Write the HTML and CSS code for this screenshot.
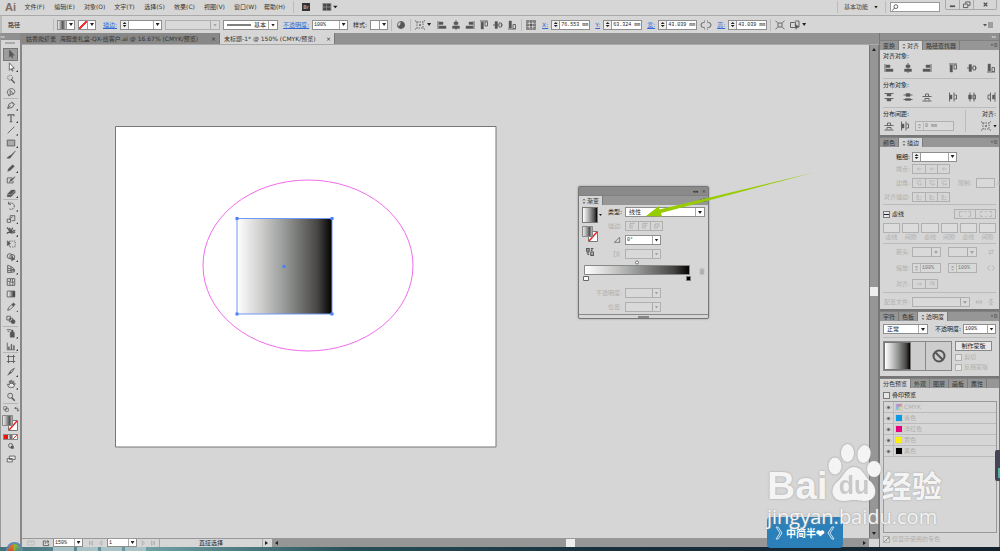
FILE: index.html
```html
<!DOCTYPE html>
<html lang="zh-CN">
<head>
<meta charset="utf-8">
<title>未标题-1* @ 150% (CMYK/预览)</title>
<link rel="stylesheet" href="styles.css">
</head>
<body>
<svg class="defs" aria-hidden="true">
  <defs>
    <linearGradient id="bw"><stop offset="0" stop-color="#fff"/><stop offset=".25" stop-color="#cfcfce"/><stop offset=".5" stop-color="#979a98"/><stop offset=".85" stop-color="#474543"/><stop offset="1" stop-color="#000"/></linearGradient>
    <linearGradient id="bwb"><stop offset="0" stop-color="#eee"/><stop offset=".3" stop-color="#bbb"/><stop offset=".7" stop-color="#555"/><stop offset="1" stop-color="#ccc"/></linearGradient>
    <symbol id="al" viewBox="0 0 12 12"><path d="M2 2v8"/><path class="f" d="M3 3h4v2.500H3zM3 7h7v2.500H3z"/></symbol>
    <symbol id="ac" viewBox="0 0 12 12"><path d="M6 1v10"/><path class="f" d="M4 3h4v2.500H4zM2.500 7h7v2.500h-7z"/></symbol>
    <symbol id="ar" viewBox="0 0 12 12"><path d="M10 2v8"/><path class="f" d="M5 3h4v2.500H5zM2 7h7v2.500H2z"/></symbol>
    <symbol id="at" viewBox="0 0 12 12"><path d="M2 2h8"/><path class="f" d="M3 3h2.500v7H3z"/><path d="M7 3h2.500v4H7z"/></symbol>
    <symbol id="am" viewBox="0 0 12 12"><path d="M1 6h10"/><path class="f" d="M3 2.500h2.500v7H3z"/><path d="M7 4h2.500v4H7z" fill="#d6d6d6"/></symbol>
    <symbol id="ab" viewBox="0 0 12 12"><path d="M2 10h8"/><path class="f" d="M3 2h2.500v7H3z"/><path d="M7 5.500h2.500v4H7z"/></symbol>
    <symbol id="dt" viewBox="0 0 12 12"><path d="M1.500 2.500h9M1.500 7.500h9"/><path class="f" d="M4 3h4v2H4zM4 8h4v2H4z"/></symbol>
    <symbol id="dm" viewBox="0 0 12 12"><path d="M1.500 4h9M1.500 8.500h9"/><path class="f" d="M4 2.500h4v3H4zM3.500 7.500h5v2h-5z"/></symbol>
    <symbol id="db" viewBox="0 0 12 12"><path d="M1.500 5.500h9M1.500 10h9"/><path d="M4.500 5V3h3v2M4 9.500v-2h4v2"/></symbol>
    <symbol id="dl" viewBox="0 0 12 12"><path d="M2.500 1.500v9M7 1.500v9"/><path class="f" d="M3 4h2v4H3z"/><path d="M7.500 4h2v4h-2"/></symbol>
    <symbol id="dc" viewBox="0 0 12 12"><path d="M4 1.500v9M8 1.500v9"/><path class="f" d="M2.500 4h3v4h-3z"/><path d="M7 4h2.500v4H7z"/></symbol>
    <symbol id="dr" viewBox="0 0 12 12"><path d="M5.500 1.500v9M10 1.500v9"/><path d="M5 4H3v4h2"/><path class="f" d="M7.500 4h2v4h-2z"/></symbol>
    <symbol id="target" viewBox="0 0 12 12"><path d="M3 3h6v6H3z" stroke-dasharray="1.500 1"/><path d="M1 1.500l1.500 1M11 1.500l-1.500 1M1 10.500l1.500-1M11 10.500l-1.500-1M6 5v2M5 6h2"/></symbol>
    <symbol id="chain" viewBox="0 0 12 12"><path d="M4.500 3.500H3.500a2.500 2.500 0 000 5h1M7.500 3.500h1a2.500 2.500 0 010 5h-1M4.500 1.500v1M7.500 1.500v1M4.500 9.500v1M7.500 9.500v1"/></symbol>
    <symbol id="iso" viewBox="0 0 12 12"><path d="M4 4h4v4H4zM1.500 2l2 1.500M10.500 2l-2 1.500M1.500 10l2-1.500M10.500 10l-2-1.500"/></symbol>
    <symbol id="globe" viewBox="0 0 12 12"><circle cx="6" cy="6" r="3.500"/><path class="f" d="M6 2.500a4 4 0 013.500 4C9 10 4 10 2.500 7.500c3 0 3-3 3.500-5z"/></symbol>
    <symbol id="ref" viewBox="0 0 12 12"><path d="M2 2h8v8H2zM6 2v8M2 6h8" stroke-dasharray="1 .6"/><path d="M1.500 1.500h2v2h-2zM5 1.500h2v2H5zM8.500 1.500h2v2h-2zM1.500 5h2v2h-2zM8.500 5h2v2h-2zM1.500 8.500h2v2h-2zM5 8.500h2v2H5zM8.500 8.500h2v2h-2z" stroke-width=".7"/><path class="f" d="M5 5h2v2H5z"/></symbol>
    <symbol id="sel" viewBox="0 0 12 12"><path d="M1.500 3.500h5v5h-5zM6 2h4v6H7"/><path class="f" d="M6 5l4 3-2 .5-1 2z"/></symbol>
    <symbol id="flyout" viewBox="0 0 12 12"><path class="f n" d="M1 5h4L3 7.500z"/><path d="M6 4h5M6 6h5M6 8h5"/></symbol>
    <symbol id="swap" viewBox="0 0 12 12"><path d="M2 4h7M7 2l2.500 2L7 6M10 8H3M5 6L2.500 8 5 10"/></symbol>
    <symbol id="mir" viewBox="0 0 12 12"><path d="M6 2v8M4.500 6L2 4v4zM7.500 6L10 4v4z"/></symbol>
    <symbol id="mirv" viewBox="0 0 12 12"><path d="M2 6h8M6 4.500L4 2h4zM6 7.500L4 10h4z"/></symbol>
    <symbol id="eye" viewBox="0 0 12 12"><path d="M.5 6Q6 .5 11.500 6 6 11.500.5 6z"/><circle class="f n" cx="6" cy="6" r="2.200"/></symbol>
    <symbol id="cap" viewBox="0 0 12 12"><path d="M10 6H4M6 3.500L3.500 6 6 8.500"/></symbol>
    <symbol id="join" viewBox="0 0 12 12"><path d="M2 3h8M2 6h3v4M6 8h4M8 6l2 2-2 2"/></symbol>
    <symbol id="base" viewBox="0 0 12 12"><path d="M3 2v8h7M5 3v5M7 6h3"/></symbol>
  </defs>
</svg>

<div class="app">
  <header class="menubar">
    <span class="logo">Ai</span>
    <nav class="menus">
      <button>文件(F)</button><button>编辑(E)</button><button>对象(O)</button><button>文字(T)</button><button>选择(S)</button><button>效果(C)</button><button>视图(V)</button><button>窗口(W)</button><button>帮助(H)</button>
    </nav>
    <i class="sep"></i>
    <button class="bridge" aria-label="Bridge">Br</button>
    <button class="arrange" aria-label="排列文档"><svg viewBox="0 0 17 9"><path d="M0 0h10v9H0z" fill="#888"/><path d="M1 1h3v3H1zM5 1h4v3H5zM1 5h3v3H1zM5 5h4v3H5z" fill="#444"/><path d="M12 3h5l-2.500 3z"/></svg></button>
    <span class="grow"></span>
    <i class="sep"></i>
    <button class="workspace-name">基本功能 <b class="tri"></b></button>
    <i class="sep"></i>
    <label class="search"><svg viewBox="0 0 8 8"><circle cx="5" cy="3" r="2.200"/><path d="M3.500 4.500L1 7.500"/></svg><input type="search" aria-label="搜索"></label>
    <div class="winbtns">
      <button aria-label="最小化"><svg viewBox="0 0 10 8"><path d="M2 6h6" stroke-width="2"/></svg></button>
      <button aria-label="还原"><svg viewBox="0 0 10 8"><path d="M4 3V1h5v4H7M1.500 3.500h5v4h-5z"/></svg></button>
      <button class="close" aria-label="关闭"><svg viewBox="0 0 10 8"><path d="M3 2l4 4M7 2L3 6" stroke-width="1.500"/></svg></button>
    </div>
  </header>

  <div class="control">
    <span class="object-type">路径</span><i class="sep"></i>
    <button class="swatch" aria-label="填色"><span class="chip grad"></span><b class="tri"></b></button>
    <button class="swatch" aria-label="描边颜色"><span class="chip none"></span><b class="tri"></b></button>
    <a class="lbl first" href="#stroke">描边:</a>
    <span class="num w42"><span class="spin"></span><input aria-label="描边粗细"><b class="drop"></b></span>
    <span class="dd w55 off"><select disabled aria-label="变量宽度"><option></option></select></span>
    <span class="dd w55 brush"><svg viewBox="0 0 24 4"><path d="M0 2h24"/></svg><select aria-label="画笔定义"><option>基本</option></select></span>
    <a class="lbl" href="#opacity">不透明度:</a>
    <span class="num w36"><input aria-label="不透明度" value="100%"><b class="drop"></b></span>
    <span class="lbl">样式:</span>
    <button class="swatch" aria-label="图形样式"><span class="chip"></span><b class="tri"></b></button>
    <i class="sep"></i>
    <button class="ib" aria-label="重新着色"><svg><use href="#globe"/></svg></button><i class="sep"></i>
    <button class="ib wide" aria-label="对齐到"><svg><use href="#target"/></svg><b class="tri"></b></button>
    <div class="aligns">
      <button class="ib" aria-label="左对齐"><svg><use href="#al"/></svg></button><button class="ib" aria-label="水平居中"><svg><use href="#ac"/></svg></button><button class="ib" aria-label="右对齐"><svg><use href="#ar"/></svg></button><button class="ib" aria-label="顶对齐"><svg><use href="#at"/></svg></button><button class="ib" aria-label="垂直居中"><svg><use href="#am"/></svg></button><button class="ib" aria-label="底对齐"><svg><use href="#ab"/></svg></button>
    </div>
    <i class="sep"></i>
    <button class="ib" aria-label="参考点"><svg><use href="#ref"/></svg></button>
    <label class="lbl link" for="px">X:</label><span class="num w39"><span class="spin"></span><input id="px" value="76.553 mm"></span>
    <label class="lbl link" for="py">Y:</label><span class="num w39"><span class="spin"></span><input id="py" value="63.324 mm"></span>
    <label class="lbl link" for="pw">宽:</label><span class="num w39"><span class="spin"></span><input id="pw" value="43.039 mm"></span>
    <button class="ib" aria-label="约束比例"><svg><use href="#chain"/></svg></button>
    <label class="lbl link" for="ph">高:</label><span class="num w39"><span class="spin"></span><input id="ph" value="43.039 mm"></span>
    <i class="sep"></i>
    <button class="ib" aria-label="隔离"><svg><use href="#iso"/></svg></button>
    <button class="ib wide" aria-label="选择类似对象"><svg><use href="#sel"/></svg><b class="tri"></b></button>
    <span class="grow"></span>
    <button class="ib end" aria-label="面板菜单"><svg><use href="#flyout"/></svg></button>
  </div>

  <div class="work">
    <aside class="toolbox">
      <div class="dark-head">▸▸</div>
      <i class="grip"></i>
      <div class="tools g4">
        <button class="on" aria-label="选择"><svg viewBox="0 0 12 12"><path class="f" d="M4 1v9l2-2 1.500 3 1-.5L7 7.500h3z"/></svg></button>
        <button class="more" aria-label="直接选择"><svg viewBox="0 0 12 12"><path d="M4 1v9l2-2 1.500 3 1-.5L7 7.500h3z" fill="#fff"/></svg></button>
        <button aria-label="魔棒"><svg viewBox="0 0 12 12"><circle cx="5" cy="4.500" r="3" stroke-dasharray="1.500 1"/><path d="M6 6l4.500 5" stroke-width="1.500"/></svg></button>
        <button aria-label="套索"><svg viewBox="0 0 12 12"><path d="M3 9C0 7 2 2 6.500 2S12 7 8.500 8.500M5 4v6l1.500-1.500H9zM3 8.500c-1 2 1 3 2 1"/></svg></button>
      </div>
      <div class="tools g8">
        <button class="more" aria-label="钢笔"><svg viewBox="0 0 12 12"><path d="M2 10l1.500-5L7 3l2.500 2.500-2 3.500zM2 10l3.500-3.500M7 2l3.500 3.500"/></svg></button>
        <button class="more" aria-label="文字"><svg viewBox="0 0 12 12"><path d="M2.500 4V2h7v2M6 2v8M4.500 10.500h3" stroke-width="1.300"/></svg></button>
        <button class="more" aria-label="直线"><svg viewBox="0 0 12 12"><path d="M2 10l8-8"/></svg></button>
        <button class="more" aria-label="矩形"><svg viewBox="0 0 12 12"><path d="M1.500 2.500h9v7h-9z" fill="#aaa"/></svg></button>
        <button aria-label="画笔"><svg viewBox="0 0 12 12"><path class="f" d="M11.500 1L6 6 5 7l1 1 1-1zM5 7C3 7 3 9 1 9.500c2 1 5 .5 5-1.500z"/></svg></button>
        <button class="more" aria-label="铅笔"><svg viewBox="0 0 12 12"><path class="f" d="M2 10l1-3 5-5 2 2-5 5z"/></svg></button>
        <button aria-label="斑点画笔"><svg viewBox="0 0 12 12"><path d="M1.500 3.500h6M1.500 3.500v6h7V7"/><path class="f" d="M11 2L6 5 4 8l3-1z"/></svg></button>
        <button class="more" aria-label="橡皮擦"><svg viewBox="0 0 12 12"><path class="f" d="M1.500 7.500l5-5h4.500L6.500 7.500zM1.500 8.500v2h4.500l5-5v-2L6.500 8.500z"/></svg></button>
      </div>
      <div class="tools g10">
        <button class="more" aria-label="旋转"><svg viewBox="0 0 12 12"><path d="M3 3.500C6 1 10 3 10 6s-3 5-6 3.500M3 1v3h3" stroke-dasharray="3 .7"/></svg></button>
        <button class="more" aria-label="缩放"><svg viewBox="0 0 12 12"><path d="M1.500 6h4v4h-4zM5 5V2h5.500v6H7M4 7l4-4"/></svg></button>
        <button class="more" aria-label="宽度"><svg viewBox="0 0 12 12"><path d="M1 2c3 1 2 5 5 5s3-3 5-1M1 9c3-4 6 2 10-2M4 2l2 4 2-4" stroke-width="1.500"/></svg></button>
        <button aria-label="自由变换"><svg viewBox="0 0 12 12"><path class="f" d="M1.500 2v6l4-2.500z"/><path d="M4 2.500h7v7H4z" stroke-dasharray="1.500 1.200"/></svg></button>
        <button class="more" aria-label="形状生成器"><svg viewBox="0 0 12 12"><circle cx="4.500" cy="5" r="3"/><circle cx="7.500" cy="6" r="3"/><path class="f" d="M7 5v6l1.500-2h2z"/></svg></button>
        <button class="more" aria-label="透视网格"><svg viewBox="0 0 12 12"><path d="M2 1.500v9l8-1V6L6 3v7M2 1.500L6 3M2 5l8 2M2 8h8"/></svg></button>
        <button aria-label="网格"><svg viewBox="0 0 12 12"><path d="M1.500 2h9v8h-9zM2 6c2-3 5 3 8-1M5 2c2 2-2 5 0 8M8 2c-1 2 1 5 0 8"/></svg></button>
        <button aria-label="渐变"><svg viewBox="0 0 12 12"><path d="M1.500 2.500h9v7h-9z" fill="url(#bw)"/></svg></button>
        <button class="more" aria-label="吸管"><svg viewBox="0 0 12 12"><path d="M2 10l1-3 4-4 2 2-4 4z" /><path class="f" d="M7 3l2-2 2 2-2 2z"/></svg></button>
        <button aria-label="混合"><svg viewBox="0 0 12 12"><path d="M1 1.500h4.500v4.500H1zM4 4h4v4H4z"/><circle class="f" cx="8.500" cy="8" r="2.500"/></svg></button>
      </div>
      <div class="tools g2">
        <button class="more" aria-label="符号喷枪"><svg viewBox="0 0 12 12"><path class="f" d="M5 5h5v6H5zM6.500 2.500h2V5h-2z"/><path d="M1 2h5M2 4h2"/></svg></button>
        <button class="more" aria-label="柱形图"><svg viewBox="0 0 12 12"><path d="M1.500 2v8.500h9"/><path class="f" d="M3 7h1v3H3zM6 4h1v6H6zM9 5.500h1V10H9z"/></svg></button>
      </div>
      <div class="tools g4">
        <button aria-label="画板"><svg viewBox="0 0 12 12"><path d="M3 1v10M9 1v10M1 3h10M1 9h10"/></svg></button>
        <button class="more" aria-label="切片"><svg viewBox="0 0 12 12"><path class="f" d="M2 10l3-5 2 1.500z"/><path d="M5 5l5-3.500-3 5"/></svg></button>
        <button class="more" aria-label="抓手"><svg viewBox="0 0 12 12"><path d="M3.500 10L1.500 6.500l1-.5L4 7.500V2.500l1-.5 1 4V1.500h1L7.500 6l1-3.500 1 .5L9 7l1-1.500h1L9 10z" fill="#eee"/></svg></button>
        <button aria-label="缩放视图"><svg viewBox="0 0 12 12"><circle cx="5" cy="4.500" r="3"/><path d="M7 7l3.500 3.500" stroke-width="1.800"/></svg></button>
      </div>
      <div class="swaps"><svg viewBox="0 0 8 8"><path d="M1 1h4v4H1zM3 3h4v4H3z" fill="#fff"/></svg><svg viewBox="0 0 8 8"><path d="M3 1L1 3l2 1M1 3h4v3M4 5l1 2 2-2"/></svg></div>
      <div class="fillstroke"><svg viewBox="0 0 17 17"><path d="M6.500 5.500h9v10h-9z" fill="#fff" stroke="#777"/><path d="M7 15l8-9" stroke="#e22" stroke-width="1.500"/><path d="M.5.5h10v10H.5z" fill="url(#bwb)" stroke="#888"/></svg></div>
      <div class="modes"><span class="red"></span><span class="grad"></span><span class="none"></span></div>
      <div class="tools g1"><button aria-label="绘图模式"><svg viewBox="0 0 12 12"><circle cx="5.500" cy="5.500" r="2.500"/><path class="f" d="M6 6h3v3H6z"/></svg></button><button aria-label="屏幕模式"><svg viewBox="0 0 12 12"><path d="M4 2.500h7v4H4zM1.500 5.500h6v4h-6z" fill="#eee"/></svg></button></div>
    </aside>

    <main class="doc">
      <div class="tabs">
        <button class="tab t1">姑香爬虾羹&nbsp; 海胆羹礼盒-QX-给客户.ai @ 16.67% (CMYK/预览)<span>×</span></button>
        <button class="tab t2 on">未标题-1* @ 150% (CMYK/预览)<span>×</span></button>
      </div>
      <div class="view">
        <div class="canvas">
          <svg class="artboard" viewBox="115 126 382 322">
            <path d="M115.500 126.500h380.500v320.500h-380.500z" fill="#fff" stroke="#777"/>
            <ellipse cx="308" cy="265.500" rx="105" ry="85.500" fill="none" stroke="#f06bea"/>
            <path d="M237 218.500h95v95.500h-95z" fill="url(#bw)" stroke="#6f97f5"/>
            <path d="M235.500 217h3v3h-3zM330.500 217h3v3h-3zM235.500 312.500h3v3h-3zM330.500 312.500h3v3h-3zM282.500 265h3v3h-3z" fill="#4d80f5" stroke="none"/>
          </svg>

          <section class="float">
            <div class="float-head"><span>◂◂</span><span>×</span></div>
            <div class="ptabs"><button class="on"><svg class="updown" viewBox="0 0 4 8"><path d="M1 3.500L2 2l1 1.500M1 5l1 1.500L3 5"/></svg>渐变</button><span class="grow"></span><svg class="fly"><use href="#flyout"/></svg></div>
            <div class="gbody">
              <div class="gtop">
                <div class="gleft">
                  <div class="gpick"><span class="gthumb"></span><b class="tri"></b></div>
                  <svg viewBox="0 0 17 17"><path d="M6.500 5.500h9v10h-9z" fill="#fff" stroke="#777"/><path d="M7 15l8-9" stroke="#e22" stroke-width="1.500"/><path d="M.5.5h10v10H.5z" fill="url(#bwb)" stroke="#888"/></svg>
                  <svg class="rev" viewBox="0 0 12 12"><path d="M2 2h3v3H2zM7 6h3v4H7zM7 2h3M2 7h3M7 4h2M3 9h2" stroke-width="1.400"/></svg>
                </div>
                <div class="gform">
                  <label for="gt">类型:</label><span class="dd"><select id="gt"><option>线性</option></select></span>
                  <label class="dim">描边:</label><span class="seg off"><button disabled aria-label="描边中"><svg viewBox="0 0 12 12"><path d="M3 10V2h7M6 10V4" stroke-width="1.500"/></svg></button><button disabled aria-label="沿描边"><svg viewBox="0 0 12 12"><path d="M3 10V2h7M6 10V4l3 2" stroke-width="1.500"/></svg></button><button disabled aria-label="跨描边"><svg viewBox="0 0 12 12"><path d="M3 10V3h7M6 10V6h4" stroke-width="1.500"/></svg></button></span>
                  <label for="ga"><svg class="mini" viewBox="0 0 12 12"><path d="M2 9.500h8.500M2 9.500L10 2v7.500"/></svg></label><span class="num w36"><input id="ga" value="0°"><b class="drop"></b></span>
                  <label for="gr" class="dim"><svg class="mini" viewBox="0 0 12 12"><path d="M2 2v8M1 2h3M1 10h3M5 3h5M5 9h5"/><circle cx="7.500" cy="6" r="2"/></svg></label><span class="num w36 off"><input id="gr" disabled><b class="drop"></b></span>
                </div>
              </div>
              <div class="ramp">
                <svg viewBox="0 0 107 21"><path d="M.5 5.500h105v9H.5z" fill="url(#bw)" stroke="#888"/><circle cx="53" cy="2.500" r="1.500" fill="#fff" stroke="#555" stroke-width=".8"/><path d="M-.5 16.500h5v4h-5z" fill="#fff" stroke="#666"/><path d="M102.500 16.500h4v4h-4z" fill="#000" stroke="#777"/></svg>
                <svg class="mini dim" viewBox="0 0 12 12"><path class="f" d="M3 4h6v7H3z"/><path d="M2 3h8M5 2h2"/></svg>
              </div>
              <div class="gform low">
                <label class="dim" for="go">不透明度:</label><span class="num w36 off"><input id="go" disabled><b class="drop"></b></span>
                <label class="dim" for="gp">位置:</label><span class="num w36 off"><input id="gp" disabled><b class="drop"></b></span>
              </div>
            </div>
            <div class="float-foot"><i></i></div>
          </section>

          <svg class="arrow" viewBox="645 170 170 50"><path d="M646 216l13-10 .5 3.500L814 172.500 661 213l1 3.500z" fill="#97cc00"/></svg>
        </div>
        <div class="vscroll"><b class="up"></b><i></i><b class="down"></b></div>
      </div>
      <div class="status">
        <svg class="mini dim" viewBox="0 0 12 12"><path d="M1 3h10v6H1zM4 5h4"/></svg>
        <svg class="mini" viewBox="0 0 12 12"><path d="M6 3H2v7h8V7M5 7c0-3 2-3 5-3M8 2l2.500 2L8 6" stroke-width="1.300"/></svg>
        <span class="num zoomlvl"><input aria-label="缩放级别" value="150%"><b class="drop"></b></span>
        <button class="nav" aria-label="首页"><svg viewBox="0 0 8 8"><path d="M2 1v6M6 1L3 4l3 3z"/></svg></button><button class="nav" aria-label="上一个"><svg viewBox="0 0 8 8"><path d="M5 1L2 4l3 3z"/></svg></button>
        <span class="num page"><input aria-label="画板编号" value="1"><b class="drop"></b></span>
        <button class="nav" aria-label="下一个"><svg viewBox="0 0 8 8"><path d="M3 1l3 3-3 3z"/></svg></button><button class="nav" aria-label="末页"><svg viewBox="0 0 8 8"><path d="M6 1v6M2 1l3 3-3 3z"/></svg></button>
        <span class="toolname">直接选择</span>
        <b class="right"></b>
        <div class="hscroll"><b class="left"></b><i></i><b class="right"></b></div>
        <span class="corner"></span>
      </div>
    </main>

    <aside class="dock">
      <div class="dark-head">▸▸</div>
      <section class="panel">
        <div class="ptabs"><button>变换</button><button class="on"><svg class="updown" viewBox="0 0 4 8"><path d="M1 3.500L2 2l1 1.500M1 5l1 1.500L3 5"/></svg>对齐</button><button>路径查找器</button><span class="grow"></span><svg class="fly"><use href="#flyout"/></svg></div>
        <div class="pbody align">
          <h3>对齐对象:</h3>
          <div class="six"><button class="ib" aria-label="左对齐"><svg><use href="#al"/></svg></button><button class="ib" aria-label="水平居中"><svg><use href="#ac"/></svg></button><button class="ib" aria-label="右对齐"><svg><use href="#ar"/></svg></button><button class="ib g" aria-label="顶对齐"><svg><use href="#at"/></svg></button><button class="ib" aria-label="垂直居中"><svg><use href="#am"/></svg></button><button class="ib" aria-label="底对齐"><svg><use href="#ab"/></svg></button></div>
          <hr>
          <h3>分布对象:</h3>
          <div class="six"><button class="ib" aria-label="顶分布"><svg><use href="#dt"/></svg></button><button class="ib" aria-label="垂直分布"><svg><use href="#dm"/></svg></button><button class="ib" aria-label="底分布"><svg><use href="#db"/></svg></button><button class="ib g" aria-label="左分布"><svg><use href="#dl"/></svg></button><button class="ib" aria-label="水平分布"><svg><use href="#dc"/></svg></button><button class="ib" aria-label="右分布"><svg><use href="#dr"/></svg></button></div>
          <hr>
          <div class="spacing">
            <div><h3>分布间距:</h3><div class="line"><button class="ib" aria-label="垂直间距"><svg><use href="#db"/></svg></button><button class="ib" aria-label="水平间距"><svg><use href="#dl"/></svg></button><span class="num w39 off"><span class="spin"></span><input disabled aria-label="间距" value="0 mm"></span></div></div>
            <div class="to"><h3>对齐:</h3><button class="ib wide" aria-label="对齐到"><svg><use href="#target"/></svg><b class="tri"></b></button></div>
          </div>
        </div>
      </section>

      <section class="panel" id="stroke">
        <div class="ptabs"><button>颜色</button><button class="on"><svg class="updown" viewBox="0 0 4 8"><path d="M1 3.500L2 2l1 1.500M1 5l1 1.500L3 5"/></svg>描边</button><span class="grow"></span><svg class="fly"><use href="#flyout"/></svg></div>
        <div class="pbody stroke">
          <div class="row"><label for="sw">粗细:</label><span class="num w45"><span class="spin"></span><input id="sw"><b class="drop"></b></span></div>
          <div class="row dim"><label>端点:</label><span class="seg off"><button disabled aria-label="平头"><svg><use href="#cap"/></svg></button><button disabled aria-label="圆头"><svg><use href="#cap"/></svg></button><button disabled aria-label="方头"><svg><use href="#cap"/></svg></button></span></div>
          <div class="row dim"><label>边角:</label><span class="seg off"><button disabled aria-label="斜接"><svg><use href="#join"/></svg></button><button disabled aria-label="圆角"><svg><use href="#join"/></svg></button><button disabled aria-label="斜角"><svg><use href="#join"/></svg></button></span><label class="limit" for="lim">限制:</label><span class="num w18 off"><input id="lim" disabled></span>x</div>
          <div class="row dim"><label>对齐描边:</label><span class="seg off"><button disabled aria-label="居中"><svg><use href="#base"/></svg></button><button disabled aria-label="内侧"><svg><use href="#base"/></svg></button><button disabled aria-label="外侧"><svg><use href="#base"/></svg></button></span></div>
          <hr>
          <div class="dashhead"><label><input type="checkbox" class="minus">虚线</label><span class="seg off"><button disabled aria-label="保留精确"><svg viewBox="0 0 20 10"><path d="M3 8V2h4M9 2h3M14 2h3v6M3 8h3M14 8h3"/></svg></button><button disabled aria-label="对齐到角"><svg viewBox="0 0 20 10"><path d="M6 2H3v2M14 2h3v2M9 2h2M3 6v2h3M14 8h3V6M9 8h2"/></svg></button></span></div>
          <div class="dashes dim"><label><input disabled>虚线</label><label><input disabled>间隙</label><label><input disabled>虚线</label><label><input disabled>间隙</label><label><input disabled>虚线</label><label><input disabled>间隙</label></div>
          <hr>
          <div class="row tall dim"><label>箭头:</label><span class="dd w29 off"><select disabled aria-label="起点箭头"><option></option></select></span><span class="dd w29 off"><select disabled aria-label="终点箭头"><option></option></select></span><svg class="mini end" viewBox="0 0 12 12"><use href="#swap"/></svg></div>
          <div class="row tall dim"><label>缩放:</label><span class="num w29 off"><span class="spin"></span><input disabled aria-label="起点缩放" value="100%"></span><span class="num w29 off"><span class="spin"></span><input disabled aria-label="终点缩放" value="100%"></span><svg class="mini end" viewBox="0 0 12 12"><use href="#chain"/></svg></div>
          <div class="row tall dim"><label>对齐:</label><span class="seg off"><button disabled aria-label="超出端点"><svg viewBox="0 0 12 12"><path d="M2 6h7M7 4l3 2-3 2"/></svg></button><button disabled aria-label="端点处"><svg viewBox="0 0 12 12"><path d="M2 6h7M7 4l3 2-3 2M3 3h7"/></svg></button></span></div>
          <hr>
          <div class="row prof dim"><label for="prof">配置文件:</label><span class="dd w58 off"><select id="prof" disabled><option></option></select></span><svg class="mini end" viewBox="0 0 12 12"><use href="#mir"/></svg><svg class="mini" viewBox="0 0 12 12"><use href="#mirv"/></svg></div>
        </div>
      </section>

      <section class="panel" id="opacity">
        <div class="ptabs"><button>字符</button><button>色板</button><button class="on"><svg class="updown" viewBox="0 0 4 8"><path d="M1 3.500L2 2l1 1.500M1 5l1 1.500L3 5"/></svg>透明度</button><span class="grow"></span><svg class="fly"><use href="#flyout"/></svg></div>
        <div class="pbody trans">
          <div class="blend"><span class="dd w45"><select aria-label="混合模式"><option>正常</option></select></span><span class="oplabel"><label for="op">不透明度:</label><span class="num w33"><input id="op" value="100%"><b class="drop"></b></span></span></div>
          <hr>
          <div class="maskrow">
            <div class="thumbs"><span class="gthumb"></span><span class="mask"><svg viewBox="0 0 14 14"><circle cx="7" cy="7" r="5.500"/><path d="M3 3l8 8"/></svg></span></div>
            <div class="maskopts"><button>制作蒙版</button><label class="dim"><input type="checkbox" disabled>剪切</label><label class="dim"><input type="checkbox" disabled>反相蒙版</label></div>
          </div>
        </div>
      </section>

      <section class="panel last">
        <div class="ptabs"><button class="on">分色预览</button><button>外观</button><button>图层</button><button>画板</button><button>属性</button></div>
        <div class="pbody sepv">
          <label class="over"><input type="checkbox">叠印预览</label>
          <ul class="inks dim">
            <li><svg class="mini" viewBox="0 0 12 12"><use href="#eye"/></svg><i class="ink cmyk"></i>CMYK</li>
            <li><svg class="mini" viewBox="0 0 12 12"><use href="#eye"/></svg><i class="ink c"></i>青色</li>
            <li><svg class="mini" viewBox="0 0 12 12"><use href="#eye"/></svg><i class="ink m"></i>洋红色</li>
            <li><svg class="mini" viewBox="0 0 12 12"><use href="#eye"/></svg><i class="ink y"></i>黄色</li>
            <li><svg class="mini" viewBox="0 0 12 12"><use href="#eye"/></svg><i class="ink k"></i>黑色</li>
          </ul>
          <label class="spot dim"><input type="checkbox" checked disabled>仅显示使用的专色</label>
        </div>
      </section>
    </aside>
  </div>

  <footer class="taskbar"><span class="orb"></span><i></i><i></i><i></i><i></i></footer>
</div>

<span class="side-widget"></span>
<div class="badge"><svg viewBox="0 0 8 14"><path d="M1 1h2l4 6-4 6H1l4-6z"/></svg>中简半❤<svg viewBox="0 0 8 14"><path d="M7 1H5L1 7l4 6h2L3 7z"/></svg></div>
<div class="watermark">
  <div class="brand"><span>Bai</span>
    <svg viewBox="0 0 54 58"><g><ellipse cx="7" cy="22" rx="6.500" ry="8.500"/><ellipse cx="19.500" cy="9" rx="6.500" ry="9"/><ellipse cx="36" cy="10" rx="6.500" ry="9" transform="rotate(10 36 10)"/><ellipse cx="46" cy="25" rx="7" ry="8"/><path d="M26 23c8 0 10 9 16 14 9 8 6 20-5 20-5 0-7-1-11-1s-6 1-11 1C4 57 1 45 9 38c7-6 9-15 17-15z"/></g><text x="26" y="50" text-anchor="middle" class="du">du</text></svg>
    <span class="jy">经验</span></div>
  <div class="site">jingyan.baidu.com</div>
</div>
</body>
</html>
```

FILE: styles.css
```css
* { box-sizing: border-box; }
body {
  margin: 0;
  overflow: hidden;
  background: #d6d6d6;
  color: #222;
  font: 6px/8px "DejaVu Sans", "Noto Sans CJK SC", sans-serif;
}
button, input, select {
  font: inherit;
  color: inherit;
  margin: 0;
  padding: 0;
  border: 0;
  border-radius: 0;
  background: none;
  min-width: 0;
}
a { color: #3468d8; }
h3 { margin: 0; font: inherit; }
svg { display: block; fill: none; stroke: #555; overflow: visible; flex: none; }
svg .f { fill: #555; stroke-width: .5; }
svg .n { stroke: none; }
.defs { position: absolute; width: 0; height: 0; }
.grow { flex: 1; }
.app { display: flex; flex-direction: column; height: 100vh; }
.dim, .off { color: #b0b0b0; }
.dim svg, svg.dim, .off svg { stroke: #b0b0b0; }
.dim .f { fill: #b0b0b0; }
.sep { width: 1px; height: 12px; background: #bbb; flex: none; }
.tri, .up, .down, .left, .right { width: 4px; height: 3px; background: #222; clip-path: polygon(0 0, 100% 0, 50% 100%); flex: none; }
.up { clip-path: polygon(50% 0, 100% 100%, 0 100%); }
.left, .right { width: 3px; height: 4px; }
.left { clip-path: polygon(0 50%, 100% 0, 100% 100%); }
.right { clip-path: polygon(100% 50%, 0 0, 0 100%); }
.mini { width: 10px; height: 8px; }

/* fields */
.num, .dd {
  display: flex;
  position: relative;
  height: 10px;
  border: 1px solid #8e8e8e;
  background: #fff;
  flex: none;
}
.num input { flex: 1; width: 0; font: 5px/8px "Liberation Mono", monospace; padding-left: 1px; }
.drop { width: 8px; border-left: 1px solid #aaa; display: grid; place-items: center; }
.drop::after { content: ""; width: 4px; height: 3px; background: #222; clip-path: polygon(0 0, 100% 0, 50% 100%); }
.spin { width: 8px; border-right: 1px solid #999; background: #eee; display: flex; flex-direction: column; align-items: center; justify-content: center; gap: 1px; flex: none; }
.spin::before, .spin::after { content: ""; width: 4px; height: 2px; background: #222; clip-path: polygon(50% 0, 100% 100%, 0 100%); }
.spin::after { clip-path: polygon(0 0, 100% 0, 50% 100%); }
.dd select { appearance: none; flex: 1; padding: 0 10px 0 3px; opacity: 1; }
.dd::before { content: ""; position: absolute; right: 8px; top: 0; bottom: 0; width: 1px; background: #aaa; }
.dd::after { content: ""; position: absolute; right: 2px; top: 3px; width: 4px; height: 3px; background: #222; clip-path: polygon(0 0, 100% 0, 50% 100%); pointer-events: none; }
.off.num, .off.dd { background: #d9d9d9; border-color: #b0b0b0; }
.off .spin { background: #d9d9d9; border-color: #bbb; }
.off .drop::after, .off.dd::after, .off .spin::before, .off .spin::after { background: #a2a2a2; }
.off input { color: #777; }
.w18 { width: 19px; } .w29 { width: 29px; } .w33 { width: 33px; } .w36 { width: 36px; }
.w39 { width: 39px; } .w42 { width: 42px; } .w45 { width: 45px; } .w55 { width: 55px; } .w58 { width: 58px; }
.seg { display: flex; height: 10px; border: 1px solid #b0b0b0; flex: none; }
.seg button { width: 12px; display: grid; place-items: center; }
.seg button + button { border-left: 1px solid #b0b0b0; }
.seg svg { width: 8px; height: 8px; }
.ib { width: 12px; height: 12px; display: flex; align-items: center; gap: 1px; flex: none; }
.ib svg { width: 12px; height: 12px; stroke: #666; }
.ib.wide { width: 16px; }
input[type=checkbox] { appearance: none; width: 7px; height: 7px; border: 1px solid #777; background: #e6e6e6; margin-right: 2px; flex: none; }
.dim input[type=checkbox] { border-color: #b0b0b0; }
label { white-space: nowrap; }

/* menu bar */
.menubar { display: flex; align-items: center; height: 16px; border-bottom: 1px solid #aaa; padding: 0 3px 1px 5px; flex: none; }
.logo { width: 19px; font: bold 11px/14px "Liberation Sans", sans-serif; color: #806d60; }
.menus { display: flex; gap: 9px; margin-right: 8px; color: #333; }
.menus button { width: 21px; white-space: nowrap; }
.bridge { margin: 0 12px 0 8px; width: 8px; height: 8px; background: #333; color: #ccc; font-size: 5px; }
.arrange svg { width: 16px; height: 8px; stroke: none; fill: #222; }
.workspace-name { display: flex; align-items: center; gap: 6px; margin: 0 7px 0 6px; color: #444; }
.search { display: flex; align-items: center; width: 50px; height: 10px; border: 1px solid #999; background: #fff; margin: 0 5px 0 4px; }
.search svg { width: 8px; height: 7px; }
.search input { width: 0; flex: 1; }
.winbtns { display: flex; align-self: flex-start; height: 10px; border: 1px solid #aaa; border-top: 0; border-radius: 0 0 2px 2px; }
.winbtns button { width: 14px; display: grid; place-items: center; border-right: 1px solid #aaa; }
.winbtns .close { width: 22px; border: 0; }
.winbtns svg { width: 9px; height: 7px; }

/* control bar */
.control { display: flex; align-items: center; gap: 3px; height: 17px; border-left: 2px solid #bbb; padding-left: 6px; flex: none; }
.object-type { width: 42px; }
.swatch { display: flex; align-items: center; gap: 2px; width: 18px; height: 10px; border: 1px solid #8e8e8e; background: #fff; }
.chip { width: 9px; height: 8px; border-right: 1px solid #999; background: #fff; }
.grad { background: linear-gradient(90deg, #eee, #555 60%, #ccc); }
.none { background: linear-gradient(135deg, #fff 43%, #e33 43%, #e33 57%, #fff 57%); }
.lbl { padding-left: 2px; white-space: nowrap; }
.lbl.first { margin-left: 2px; }
.link { color: #3468d8; text-decoration: underline; min-width: 6px; }
.aligns { display: flex; gap: 2px; padding-left: 3px; }
.brush { align-items: center; padding-left: 3px; }
.brush svg { width: 24px; height: 4px; stroke: #000; }
.end { margin-left: auto; }
.control .end { margin-right: 6px; }

/* workspace */
.work { display: flex; flex: 1; min-height: 0; }
.dark-head { height: 7px; background: #909090; color: #ddd; font-size: 4px; line-height: 7px; flex: none; }
.toolbox { width: 22px; border-right: 2px solid #888; border-left: 1px solid #999; display: flex; flex-direction: column; flex: none; }
.toolbox .grip { width: 10px; height: 2px; background: #aaa; margin: 2px 4px 4px; }
.tools { display: grid; grid-auto-rows: 1fr; border-bottom: 1px solid #b4b4b4; margin: 0 2px; justify-items: start; flex: none; }
.tools button { width: 15px; position: relative; display: grid; place-items: center; }
.tools svg { width: 10px; height: 10px; }
.tools .on { background: #9c9c9c; border: 1px solid #777; }
.more::after { content: ""; position: absolute; right: 0; bottom: 1px; width: 2px; height: 2px; background: #333; clip-path: polygon(100% 0, 100% 100%, 0 100%); }
.g4 { height: 51px; } .g8 { height: 101px; } .g10 { height: 127px; } .g2 { height: 26px; }
.g1 { height: 25px; border: 0; }
.swaps { display: flex; gap: 5px; margin: 2px 2px 1px; }
.swaps svg { width: 6px; height: 6px; }
.fillstroke svg, .gleft svg { width: 17px; height: 17px; }
.fillstroke { margin: 2px 1px; }
.modes { display: flex; margin: 0 2px; height: 6px; border: 1px solid #888; }
.modes span { flex: 1; }
.red { background: #e11; }

.doc { flex: 1; min-width: 0; display: flex; flex-direction: column; }
.tabs { display: flex; height: 11px; background: #929292; flex: none; }
.tab { display: flex; justify-content: space-between; align-items: center; padding: 0 3px 0 4px; border-right: 1px solid #777; color: #333; white-space: nowrap; }
.t1 { width: 198px; background: #888; }
.t2 { width: 115px; }
.tab.on { background: #d6d6d6; }
.view { display: flex; flex: 1; min-height: 0; border-top: 1px solid #aaa; }
.canvas { flex: 1; position: relative; overflow: hidden; }
.artboard { position: absolute; left: 93px; top: 81px; width: 382px; height: 322px; }
.vscroll { width: 10px; background: #969696; border-left: 1px solid #777; border-right: 1px solid #777; display: flex; flex-direction: column; align-items: center; justify-content: space-between; padding: 3px 0; }
.vscroll i { width: 8px; height: 9px; background: #eee; }
.status { display: flex; align-items: center; height: 9px; border-top: 1px solid #999; padding-left: 4px; flex: none; gap: 2px; }
.status .num { height: 8px; align-self: stretch; border-top: 0; }
.status .mini + .mini { margin-left: 3px; }
.zoomlvl, .page { width: 30px; }
.zoomlvl { margin-right: 2px; }
.nav svg { width: 8px; height: 6px; stroke: #aaa; }
.toolname { width: 104px; text-align: center; border: solid #aaa; border-width: 0 1px; }
.hscroll { flex: 1; height: 8px; display: flex; justify-content: space-between; align-items: center; background: #969696; padding: 0 3px; margin-left: 2px; }
.hscroll i { width: 9px; height: 8px; background: #eee; }
.corner { width: 8px; }

/* gradient window */
.float { position: absolute; left: 556px; top: 141px; width: 131px; border: 1px solid #777; border-radius: 2px; background: #d6d6d6; box-shadow: 0 0 2px #888; }
.float-head { height: 8px; background: #8a8a8a; display: flex; justify-content: flex-end; gap: 4px; padding-right: 2px; font-size: 5px; color: #333; }
.ptabs { display: flex; height: 10px; background: #969696; border-top: 1px solid #808080; color: #333; flex: none; }
.ptabs button { display: flex; align-items: center; padding: 0 3px; border-right: 1px solid #7c7c7c; white-space: nowrap; }
.ptabs .on { background: #d6d6d6; }
.updown { width: 4px; height: 8px; margin-right: 1px; stroke-width: .8; }
.fly { width: 8px; height: 8px; margin-right: 1px; }
.gbody { padding: 2px 3px; }
.gtop { display: flex; }
.gleft { width: 22px; display: flex; flex-direction: column; gap: 3px; }
.gpick { display: flex; align-items: center; gap: 1px; }
.gpick .tri { width: 3px; height: 2px; }
.gthumb { width: 16px; height: 16px; border: 1px solid #777; background: linear-gradient(90deg, #fff, #cfcfce 25%, #979a98 50%, #474543 85%, #000); }
.gleft .rev { width: 10px; height: 10px; margin: 1px 3px 0; }
.gform { flex: 1; display: grid; grid-template-columns: 18px auto; gap: 4px 3px; align-items: center; align-content: start; justify-items: start; }
.gform label { justify-self: end; }
.gform .dd { width: 80px; }
.ramp { display: flex; align-items: center; gap: 6px; margin: 1px 2px 7px; }
.ramp > svg:first-child { width: 107px; height: 21px; }
.low { grid-template-columns: 40px auto; }
.float-foot { height: 4px; border-top: 1px solid #888; display: grid; place-items: center; }
.float-foot i { width: 11px; height: 2px; background: #888; }
.arrow { position: absolute; left: 623px; top: 125px; width: 170px; height: 50px; stroke: none; }

/* dock */
.dock { width: 121px; border-left: 1px solid #777; background: #777; display: flex; flex-direction: column; gap: 2px; padding-right: 1px; flex: none; }
.dock .dark-head { text-align: right; padding-right: 3px; margin-bottom: -2px; }
.panel { background: #d6d6d6; flex: none; }
.panel hr { border: 0; border-top: 1px solid #bbb; margin: 0; width: 100%; }
.pbody { padding: 2px 3px; display: flex; flex-direction: column; }
.align { gap: 2px; height: 85px; }
.six { display: flex; gap: 7px; padding-bottom: 2px; }
.six .g { margin-left: 7px; }
.spacing { display: flex; justify-content: space-between; }
.spacing .line { display: flex; align-items: center; gap: 4px; margin-top: 2px; }
.to { border-left: 1px solid #bbb; width: 31px; display: flex; flex-direction: column; align-items: flex-end; gap: 2px; }
.stroke { height: 162px; padding-top: 4px; }
.row { display: flex; align-items: center; gap: 2px; height: 14px; flex: none; }
.row > label:first-child { width: 27px; display: flex; justify-content: flex-end; flex: none; }
.row .limit { margin-left: 6px; margin-right: 2px; }
.row:first-child { height: 11px; }
.row.tall { height: 16px; }
.row.tall .w29 + .w29 { margin-left: 5px; }
.dashhead { display: flex; align-items: center; justify-content: space-between; height: 18px; flex: none; }
.dashhead label { display: flex; align-items: center; }
.dashhead .seg button { width: 20px; }
.dashhead .seg svg { width: 18px; }
.minus { display: grid; place-items: center; }
.minus::after { content: ""; width: 5px; height: 1px; background: #222; }
.dashes { display: flex; gap: 2px; height: 20px; flex: none; }
.dashes label { flex: 1; display: flex; flex-direction: column; align-items: center; }
.dashes input { width: 100%; height: 10px; border: 1px solid #b0b0b0; background: #dcdcdc; }
.prof { height: 18px; }
.trans { height: 55px; gap: 3px; padding-top: 3px; }
.blend, .oplabel { display: flex; align-items: center; justify-content: space-between; }
.oplabel { gap: 2px; }
.maskrow { display: flex; gap: 3px; }
.thumbs { display: flex; justify-content: space-between; width: 69px; height: 30px; border: 1px solid #888; background: #cdcdcd; }
.thumbs .gthumb { width: 27px; height: 28px; }
.mask { width: 26px; border-left: 1px solid #888; display: grid; place-items: center; }
.mask svg { width: 14px; height: 14px; stroke-width: 2; }
.maskopts { display: flex; flex-direction: column; gap: 2px; }
.maskopts button { width: 37px; height: 10px; border: 1px solid #888; background: #e8e8e8; }
.maskopts label, .over, .spot { display: flex; align-items: center; }
.last { flex: 1; display: flex; flex-direction: column; min-height: 0; }
.sepv { flex: 1; padding: 3px 2px 4px 3px; gap: 2px; }
.inks { flex: 1; list-style: none; margin: 0; padding: 0; border: 1px solid #999; }
.inks li { display: flex; align-items: center; height: 11px; border-bottom: 1px solid #bbb; }
.ink { width: 6px; height: 6px; margin: 0 2px; outline: 1px solid #ccc; }
.inks .mini { border-right: 1px solid #bbb; height: 11px; padding: 2px 1px; }
.c { background: #0b9be5; } .m { background: #e6007e; } .y { background: #fff000; } .k { background: #000; }
.cmyk { background: conic-gradient(#b7a, #dd8, #8bd, #c8c); }
.spot input { background: linear-gradient(135deg, #ddd 45%, #999 45%, #999 60%, #ddd 60%); }

.taskbar { display: flex; gap: 3px; height: 4px; padding-left: 53px; background: linear-gradient(90deg, #43727a, #6fa0a4 15%, #285058 35%, #17303c 60%, #14222e); position: relative; flex: none; }
.taskbar i { width: 21px; background: #a9c2c6; }
.orb { position: absolute; left: 6px; bottom: -8px; width: 17px; height: 17px; border-radius: 50%; background: conic-gradient(#8b3, #47a 35%, #38b 60%, #c53 75%, #e73); border: 2px solid #5b8bb5; }
.side-widget { position: absolute; right: 0; top: 450px; width: 5px; height: 31px; background: linear-gradient(#434557 58%, #5b8 58%, #5ab 90%, #434557 90%) right / 2px 100% no-repeat #434557; border-radius: 2px 0 0 2px; }

.badge { position: absolute; left: 767px; top: 517px; width: 76px; height: 31px; border-radius: 4px; background: #2b80b9; color: #fff; font: bold 10px/12px "Noto Sans CJK SC", sans-serif; display: flex; align-items: center; justify-content: center; gap: 3px; white-space: nowrap; }
.badge svg { width: 8px; height: 14px; stroke: #d4e6f2; stroke-width: 1; }
.watermark { position: absolute; left: 767px; top: 444px; color: #f4f4f4; text-shadow: 0 0 2px #999; pointer-events: none; }
.brand { display: flex; align-items: flex-end; height: 58px; font: bold 39px/32px "Liberation Sans", sans-serif; }
.brand svg { width: 54px; height: 58px; stroke: none; fill: #f4f4f4; filter: drop-shadow(0 0 1px #999); }
.brand svg .du { font: bold 25px "Liberation Sans", sans-serif; fill: #c9c9c9; text-shadow: none; }
.jy { font: bold 30px/36px "Noto Sans CJK SC", sans-serif; }
.site { font: 20px/26px "Open Sans", sans-serif; margin-top: 2px; }
```
